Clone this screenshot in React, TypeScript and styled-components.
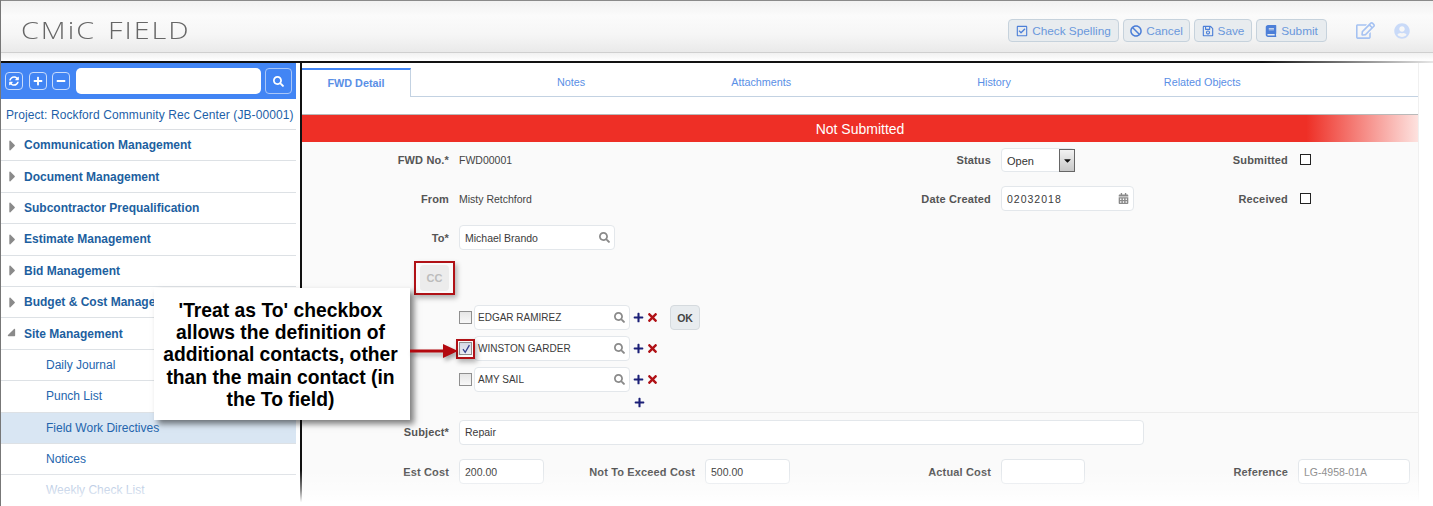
import React from 'react';
import styled, { createGlobalStyle } from 'styled-components';
import {
  FaBan,
  FaBook,
  FaCalendarAlt,
  FaCaretDown,
  FaCaretRight,
  FaMinus,
  FaPlus,
  FaRegCheckSquare,
  FaRegEdit,
  FaRegSave,
  FaSearch,
  FaSyncAlt,
  FaTimes,
  FaUserCircle,
} from 'react-icons/fa';

const GlobalStyle = createGlobalStyle`
  html, body {
    margin: 0;
    background: #fff;
    font-family: "Liberation Sans", Arial, sans-serif;
  }
  * {
    box-sizing: border-box;
  }
`;

const navGroups = [
  { name: 'Communication Management' },
  { name: 'Document Management' },
  { name: 'Subcontractor Prequalification' },
  { name: 'Estimate Management' },
  { name: 'Bid Management' },
  { name: 'Budget & Cost Management' },
  { name: 'Site Management', open: true },
];

const navLinks = ['Daily Journal', 'Punch List', 'Field Work Directives', 'Notices', 'Weekly Check List'];

const contacts = [
  { name: 'EDGAR RAMIREZ', ok: true },
  { name: 'WINSTON GARDER', checked: true },
  { name: 'AMY SAIL' },
];

export default function App() {
  return (
    <Page>
      <GlobalStyle />
      <Header>
        <Logo>CMiC FIELD</Logo>
        <Actions>
          <ActionButton $width={111}><FaRegCheckSquare />Check Spelling</ActionButton>
          <ActionButton $width={67}><FaBan />Cancel</ActionButton>
          <ActionButton $width={58}><FaRegSave />Save</ActionButton>
          <ActionButton $width={71}><FaBook />Submit</ActionButton>
        </Actions>
        <EditIcon><FaRegEdit /></EditIcon>
        <UserIcon><FaUserCircle /></UserIcon>
      </Header>
      <HeaderGap />
      <Body>
        <Sidebar>
          <SideToolbar>
            <ToolIcon><FaSyncAlt /></ToolIcon>
            <ToolIcon><FaPlus /></ToolIcon>
            <ToolIcon><FaMinus /></ToolIcon>
            <SideSearch />
            <SideSearchButton><FaSearch /></SideSearchButton>
          </SideToolbar>
          <ProjectRow>Project: Rockford Community Rec Center (JB-00001)</ProjectRow>
          {navGroups.map((group) => (
            <NavRow key={group.name}>
              <NavCaret>{group.open ? <OpenCaret /> : <FaCaretRight />}</NavCaret>
              {group.name}
            </NavRow>
          ))}
          {navLinks.map((link) => (
            <NavLink key={link} $active={link === 'Field Work Directives'} $faded={link === 'Weekly Check List'}>
              {link}
            </NavLink>
          ))}
        </Sidebar>
        <Main>
          <Tabs>
            <ActiveTab>FWD Detail</ActiveTab>
            <Tab $gap={146}>Notes</Tab>
            <Tab $gap={146}>Attachments</Tab>
            <Tab $gap={186}>History</Tab>
            <Tab $gap={153}>Related Objects</Tab>
          </Tabs>
          <StatusBand>Not Submitted</StatusBand>
          <Form>
            <TopRow>
              <Label>FWD No.*</Label>
              <Value>FWD00001</Value>
              <Label>Status</Label>
              <SelectBox>
                Open
                <SelectArrow><FaCaretDown /></SelectArrow>
              </SelectBox>
              <Label>Submitted</Label>
              <PlainCheck />
            </TopRow>
            <TopRow>
              <Label>From</Label>
              <Value>Misty Retchford</Value>
              <Label>Date Created</Label>
              <Input $width={133} $spaced>
                02032018
                <FieldIcon><FaCalendarAlt /></FieldIcon>
              </Input>
              <Label>Received</Label>
              <PlainCheck />
            </TopRow>
            <TopRow>
              <Label>To*</Label>
              <Input $width={156}>
                Michael Brando
                <FieldIcon><FaSearch /></FieldIcon>
              </Input>
            </TopRow>
            <CcFrame>
              <CcButton>CC</CcButton>
            </CcFrame>
            <ContactList>
              {contacts.map((contact) => (
                <ContactRow key={contact.name}>
                  <ContactCheck $marked={contact.checked}>
                    {contact.checked && (
                      <svg viewBox="0 0 10 10" width="10" height="10">
                        <path d="M2 5.2l2.2 3.2L8.4 1.2" fill="none" stroke="#33408f" strokeWidth="1.3" />
                      </svg>
                    )}
                  </ContactCheck>
                  <ContactInput $width={156}>
                    {contact.name}
                    <FieldIcon><FaSearch /></FieldIcon>
                  </ContactInput>
                  <AddMark><FaPlus /></AddMark>
                  <RemoveMark><FaTimes /></RemoveMark>
                  {contact.ok && <OkButton>OK</OkButton>}
                </ContactRow>
              ))}
              <LastAdd><FaPlus /></LastAdd>
            </ContactList>
            <Divider />
            <SubjectRow>
              <Label>Subject*</Label>
              <Input $width={685}>Repair</Input>
            </SubjectRow>
            <CostRow>
              <Label>Est Cost</Label>
              <Input>200.00</Input>
              <Label>Not To Exceed Cost</Label>
              <Input>500.00</Input>
              <Label>Actual Cost</Label>
              <Input />
              <Label>Reference</Label>
              <Input $muted>LG-4958-01A</Input>
            </CostRow>
          </Form>
        </Main>
        <RightRail />
      </Body>
      <Callout>
        'Treat as To' checkbox allows the definition of additional contacts, other than the main contact (in the To
        field)
      </Callout>
      <Arrow viewBox="0 0 48 16" width="48" height="16">
        <path d="M0 6.4h33V1l15 7-15 7V9.6H0z" fill="#b3090f" />
      </Arrow>
      <BottomFade />
    </Page>
  );
}

const Page = styled.div`
  position: relative;
  width: 1433px;
  height: 506px;
  overflow: hidden;
  background: #fff;
  border-left: 1px solid #777;
`;

const Header = styled.header`
  display: flex;
  align-items: center;
  height: 53px;
  padding: 8px 23px 0 20px;
  background: linear-gradient(to bottom, #f1f1f1 0, #fbfbfb 30%, #f6f6f6 65%, #e9e9e9 100%);
  box-shadow: inset 0 1px 0 #8a8a8a, inset 0 -1px 0 #cfcfcf;
`;

const Logo = styled.div`
  margin-bottom: 2px;
  font-family: "Open Sans", sans-serif;
  font-weight: 300;
  font-size: 23px;
  letter-spacing: 1.6px;
  word-spacing: 2px;
  color: #666;
  transform: scaleX(1.25);
  transform-origin: left center;
`;

const Actions = styled.div`
  display: flex;
  gap: 4px;
  margin-left: auto;
  margin-right: 29px;
`;

const ActionButton = styled.button<{ $width: number }>`
  display: flex;
  align-items: center;
  justify-content: center;
  gap: 4px;
  width: ${(p) => p.$width}px;
  height: 23px;
  padding: 0;
  font: 11.8px "Liberation Sans", Arial, sans-serif;
  color: #6a98dc;
  background: #e8ecef;
  border: 1px solid #c6d2dc;
  border-radius: 4px;

  svg {
    font-size: 12px;
    color: #4c7fd8;
  }
`;

const EditIcon = styled.span`
  display: flex;
  font-size: 19px;
  color: #a5c2f2;
  margin-right: 19px;
`;

const UserIcon = styled.span`
  display: flex;
  font-size: 16px;
  color: #c9daf8;
`;

const HeaderGap = styled.div`
  height: 10px;
  background: linear-gradient(to bottom, #f1f1f1, #fff);
  border-bottom: 2px solid;
  border-image: linear-gradient(to right, #111 0, #111 88%, #e8e8e8 100%) 1;
`;

const Body = styled.div`
  display: flex;
  height: 443px;
`;

const Sidebar = styled.nav`
  width: 301px;
  padding-right: 4px;
  background: #fff;
  border-right: 2px solid #111;
`;

const SideToolbar = styled.div`
  display: flex;
  align-items: center;
  height: 36px;
  padding-left: 4px;
  background: #4285f4;
`;

const ToolIcon = styled.span`
  display: flex;
  align-items: center;
  justify-content: center;
  width: 18px;
  height: 18px;
  margin-right: 5.5px;
  color: #fff;
  font-size: 10px;
  border: 1px solid #c9dcfb;
  border-radius: 4px;
`;

const SideSearch = styled.div`
  flex-shrink: 0;
  width: 185px;
  height: 26px;
  background: #fff;
  border-radius: 5px;
`;

const SideSearchButton = styled.span`
  display: flex;
  align-items: center;
  justify-content: center;
  width: 27px;
  height: 26px;
  margin-left: 4px;
  color: #fff;
  font-size: 11px;
  border: 1px solid #a9c6f8;
  border-radius: 4px;
`;

const ProjectRow = styled.div`
  display: flex;
  align-items: center;
  height: 31px;
  padding: 1px 0 0 5px;
  font-size: 12px;
  letter-spacing: 0.1px;
  white-space: nowrap;
  color: #1d5fa8;
  border-bottom: 1px solid #dcdfe3;
`;

const NavRow = styled.div`
  display: flex;
  align-items: center;
  height: 31.4px;
  font-size: 12px;
  font-weight: bold;
  white-space: nowrap;
  color: #1d5fa0;
  border-bottom: 1px solid #dde1e5;
`;

const NavCaret = styled.span`
  display: flex;
  justify-content: center;
  width: 22px;
  margin-right: 1px;
  font-size: 17px;
  color: #8a8a8a;
`;

const OpenCaret = styled(FaCaretDown)`
  transform: rotate(-45deg);
`;

const NavLink = styled.div<{ $active?: boolean; $faded?: boolean }>`
  display: flex;
  align-items: center;
  height: 31.4px;
  padding-left: 45px;
  font-size: 12px;
  color: ${(p) => (p.$faded ? '#94aed4' : '#2465ad')};
  background: ${(p) => (p.$active ? '#d9e6f3' : '#fff')};
  border-bottom: 1px solid #dde1e5;
`;

const Main = styled.main`
  width: 1116px;
  padding-top: 5px;
  background: #fff;
`;

const Tabs = styled.div`
  display: flex;
  align-items: center;
  height: 29px;
  font-size: 10.8px;
  border-bottom: 1px solid #c3d2e2;
`;

const ActiveTab = styled.div`
  display: flex;
  align-items: center;
  justify-content: center;
  width: 109px;
  height: 29px;
  font-weight: bold;
  color: #5a8fe6;
  background: #fff;
  border-top: 2px solid #4285f4;
  border-right: 1px solid #c3d2e2;
`;

const Tab = styled.div<{ $gap: number }>`
  margin-left: ${(p) => p.$gap}px;
  color: #5a8fe6;
`;

const StatusBand = styled.div`
  display: flex;
  align-items: center;
  justify-content: center;
  height: 28px;
  margin-top: 17px;
  font-size: 14px;
  color: #fff;
  background: linear-gradient(to right, #ee2f26 0, #ee2f26 90%, #fde2df 100%);
  border-top: 1px solid #b9b9b9;
`;

const Form = styled.div`
  height: 370px;
  padding-top: 5px;
  background: #fafafa;
`;

const TopRow = styled.div`
  display: grid;
  grid-template-columns: 147px 300px 222px 135px 142px 20px;
  column-gap: 10px;
  align-items: center;
  height: 25px;
  margin-bottom: 14px;
`;

const Label = styled.div`
  font-size: 11px;
  font-weight: bold;
  letter-spacing: 0.15px;
  text-align: right;
  white-space: nowrap;
  color: #555;
`;

const Value = styled.div`
  font-size: 10.5px;
  color: #444;
`;

const SelectBox = styled.div`
  display: flex;
  align-items: center;
  justify-content: space-between;
  width: 74px;
  height: 24px;
  padding: 2px 0 0 5px;
  font-size: 11px;
  color: #333;
  background: #fff;
  border: 1px solid #e4e8ec;
  border-radius: 4px;
`;

const SelectArrow = styled.span`
  display: flex;
  align-items: center;
  justify-content: center;
  align-self: stretch;
  width: 16px;
  margin: -2px -1px -1px 0;
  font-size: 11px;
  color: #111;
  background: linear-gradient(to bottom, #f2f2f2, #c8c8c8);
  border: 1px solid #666;
`;

const PlainCheck = styled.span`
  display: block;
  width: 11px;
  height: 11px;
  margin-left: 2px;
  background: #fff;
  border: 1px solid #222;
`;

const Input = styled.div<{ $width?: number; $spaced?: boolean; $muted?: boolean }>`
  display: flex;
  align-items: center;
  justify-content: space-between;
  width: ${(p) => (p.$width ? `${p.$width}px` : '100%')};
  height: 25px;
  padding: 0 4px 0 5px;
  font-size: 10.5px;
  letter-spacing: ${(p) => (p.$spaced ? '1px' : '0')};
  color: ${(p) => (p.$muted ? '#888' : '#3a3a3a')};
  background: #fff;
  border: 1px solid #e3e7eb;
  border-radius: 4px;
`;

const ContactInput = styled(Input)`
  font-size: 10px;
  padding-left: 3px;
`;

const FieldIcon = styled.span`
  display: flex;
  font-size: 11px;
  color: #8a8a8a;
`;

const CcFrame = styled.div`
  display: flex;
  align-items: center;
  justify-content: center;
  width: 41px;
  height: 34px;
  margin: -3px 0 0 112px;
  border: 2px solid #b01116;
  box-shadow: 2px 3px 5px rgba(0, 0, 0, 0.3);
`;

const CcButton = styled.div`
  display: flex;
  align-items: center;
  justify-content: center;
  width: 29px;
  height: 26px;
  font-size: 11px;
  font-weight: bold;
  color: #bcbcbc;
  background: #ececec;
  border-radius: 4px;
`;

const ContactList = styled.div`
  display: flex;
  flex-direction: column;
  gap: 6px;
  margin: 10px 0 0 157px;
`;

const ContactRow = styled.div`
  display: flex;
  align-items: center;
  height: 25px;
`;

const ContactCheck = styled.span<{ $marked?: boolean }>`
  position: relative;
  display: flex;
  align-items: center;
  justify-content: center;
  width: 13px;
  height: 13px;
  margin-right: 2px;
  background: ${(p) =>
    p.$marked ? 'linear-gradient(to bottom, #d5d9e6, #eceef4)' : 'linear-gradient(to bottom, #e6e6e6, #f8f8f8)'};
  border: 1px solid #8f8f8f;

  &::after {
    content: '';
    display: ${(p) => (p.$marked ? 'block' : 'none')};
    position: absolute;
    inset: -4px -4px -5px -4px;
    border: 2px solid #b01116;
    box-shadow: 2px 3px 5px rgba(0, 0, 0, 0.3);
  }
`;

const AddMark = styled.span`
  display: flex;
  margin-left: 3px;
  font-size: 11px;
  color: #1b1f77;
`;

const RemoveMark = styled.span`
  display: flex;
  margin-left: 2px;
  font-size: 13px;
  color: #b01116;
`;

const OkButton = styled.div`
  display: flex;
  align-items: center;
  justify-content: center;
  width: 30px;
  height: 25px;
  margin-left: 11px;
  font-size: 10.5px;
  font-weight: bold;
  color: #444;
  background: #e8ecef;
  border: 1px solid #d5dade;
  border-radius: 4px;
`;

const LastAdd = styled(AddMark)`
  margin: -1px 0 0 175px;
`;

const Divider = styled.div`
  height: 1px;
  margin: 4px 0 6px 157px;
  background: #ececec;
`;

const SubjectRow = styled.div`
  display: grid;
  grid-template-columns: 147px 1fr;
  column-gap: 10px;
  align-items: center;
  height: 26px;
  margin-bottom: 14px;
`;

const CostRow = styled.div`
  display: grid;
  grid-template-columns: 147px 85px 141px 85px 191px 84px 193px 112px;
  column-gap: 10px;
  align-items: center;
  height: 25px;
`;

const RightRail = styled.div`
  width: 15px;
  border-left: 1px solid #f0f0f0;
`;

const Callout = styled.div`
  position: absolute;
  left: 153px;
  top: 288px;
  width: 256px;
  height: 132px;
  padding: 12px 10px 0 7px;
  font-size: 19.3px;
  font-weight: bold;
  line-height: 22.2px;
  text-align: center;
  color: #000;
  background: #fff;
  box-shadow: 4px 4px 6px rgba(0, 0, 0, 0.5);
`;

const Arrow = styled.svg`
  position: absolute;
  left: 409px;
  top: 343px;
  filter: drop-shadow(2px 3px 2px rgba(0, 0, 0, 0.35));
`;

const BottomFade = styled.div`
  position: absolute;
  left: -1px;
  right: 0;
  bottom: 0;
  height: 36px;
  background: linear-gradient(to bottom, rgba(255, 255, 255, 0) 0, rgba(255, 255, 255, 0.5) 55%, #fff 90%);
`;
